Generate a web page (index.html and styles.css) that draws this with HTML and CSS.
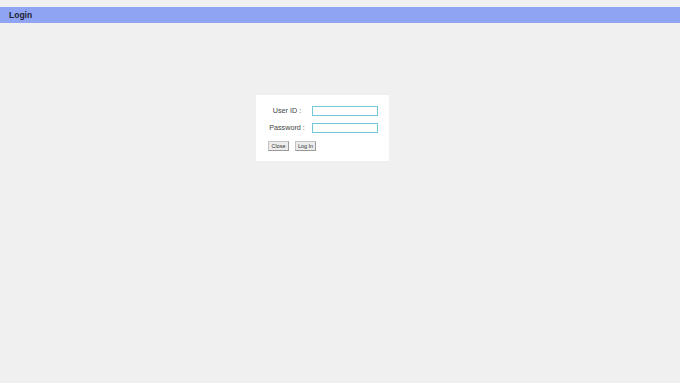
FILE: index.html
```html
<!DOCTYPE html>
<html>
<head>
<meta charset="utf-8">
<link rel="stylesheet" href="styles.css">
</head>
<body>
<div class="page">
  <header class="titlebar">Login</header>
  <main class="stage">
    <form class="panel">
      <label class="label" for="uid">User ID :</label>
      <input class="field" id="uid" type="text">
      <label class="label" for="pwd">Password :</label>
      <input class="field" id="pwd" type="password">
      <div class="actions">
        <button type="button" class="btn">Close</button>
        <button type="button" class="btn">Log In</button>
      </div>
    </form>
  </main>
</div>
</body>
</html>
```
FILE: styles.css
```css
html, body {
  margin: 0;
  padding: 0;
  background: #f0f0f0;
  font-family: "Liberation Sans", Arial, sans-serif;
}
.page {
  padding-top: 7px;
}
.titlebar {
  height: 16px;
  line-height: 16px;
  background: #8fa4f2;
  color: #1e2233;
  font-weight: bold;
  font-size: 8.5px;
  padding-left: 9px;
}
.stage {
  padding-top: 72px;
  padding-left: 256px;
}
.panel {
  width: 133px;
  height: 66px;
  box-sizing: border-box;
  background: #ffffff;
  padding: 11px 11px 0 12px;
  display: grid;
  grid-template-columns: 38px 66px;
  grid-auto-rows: 10px;
  column-gap: 6px;
  row-gap: 7px;
  margin: 0;
}
.label {
  font-size: 7.2px;
  color: #444;
  text-align: center;
  line-height: 10px;
  white-space: nowrap;
}
.field {
  width: 66px;
  height: 10px;
  box-sizing: border-box;
  border: 1px solid #72c9d9;
  background: #fff;
  margin: 0;
  padding: 0;
  outline: none;
}
.actions {
  grid-column: 1 / 3;
  display: flex;
  gap: 6px;
  margin-top: 1px;
}
.btn {
  width: 21px;
  height: 10px;
  box-sizing: border-box;
  padding: 0;
  margin: 0;
  font-family: "Liberation Sans", Arial, sans-serif;
  font-size: 5.4px;
  color: #333;
  background: #ececec;
  border: 1px solid #c4c4c4;
  border-right-color: #9a9a9a;
  border-bottom-color: #9a9a9a;
  line-height: 8px;
}
```
